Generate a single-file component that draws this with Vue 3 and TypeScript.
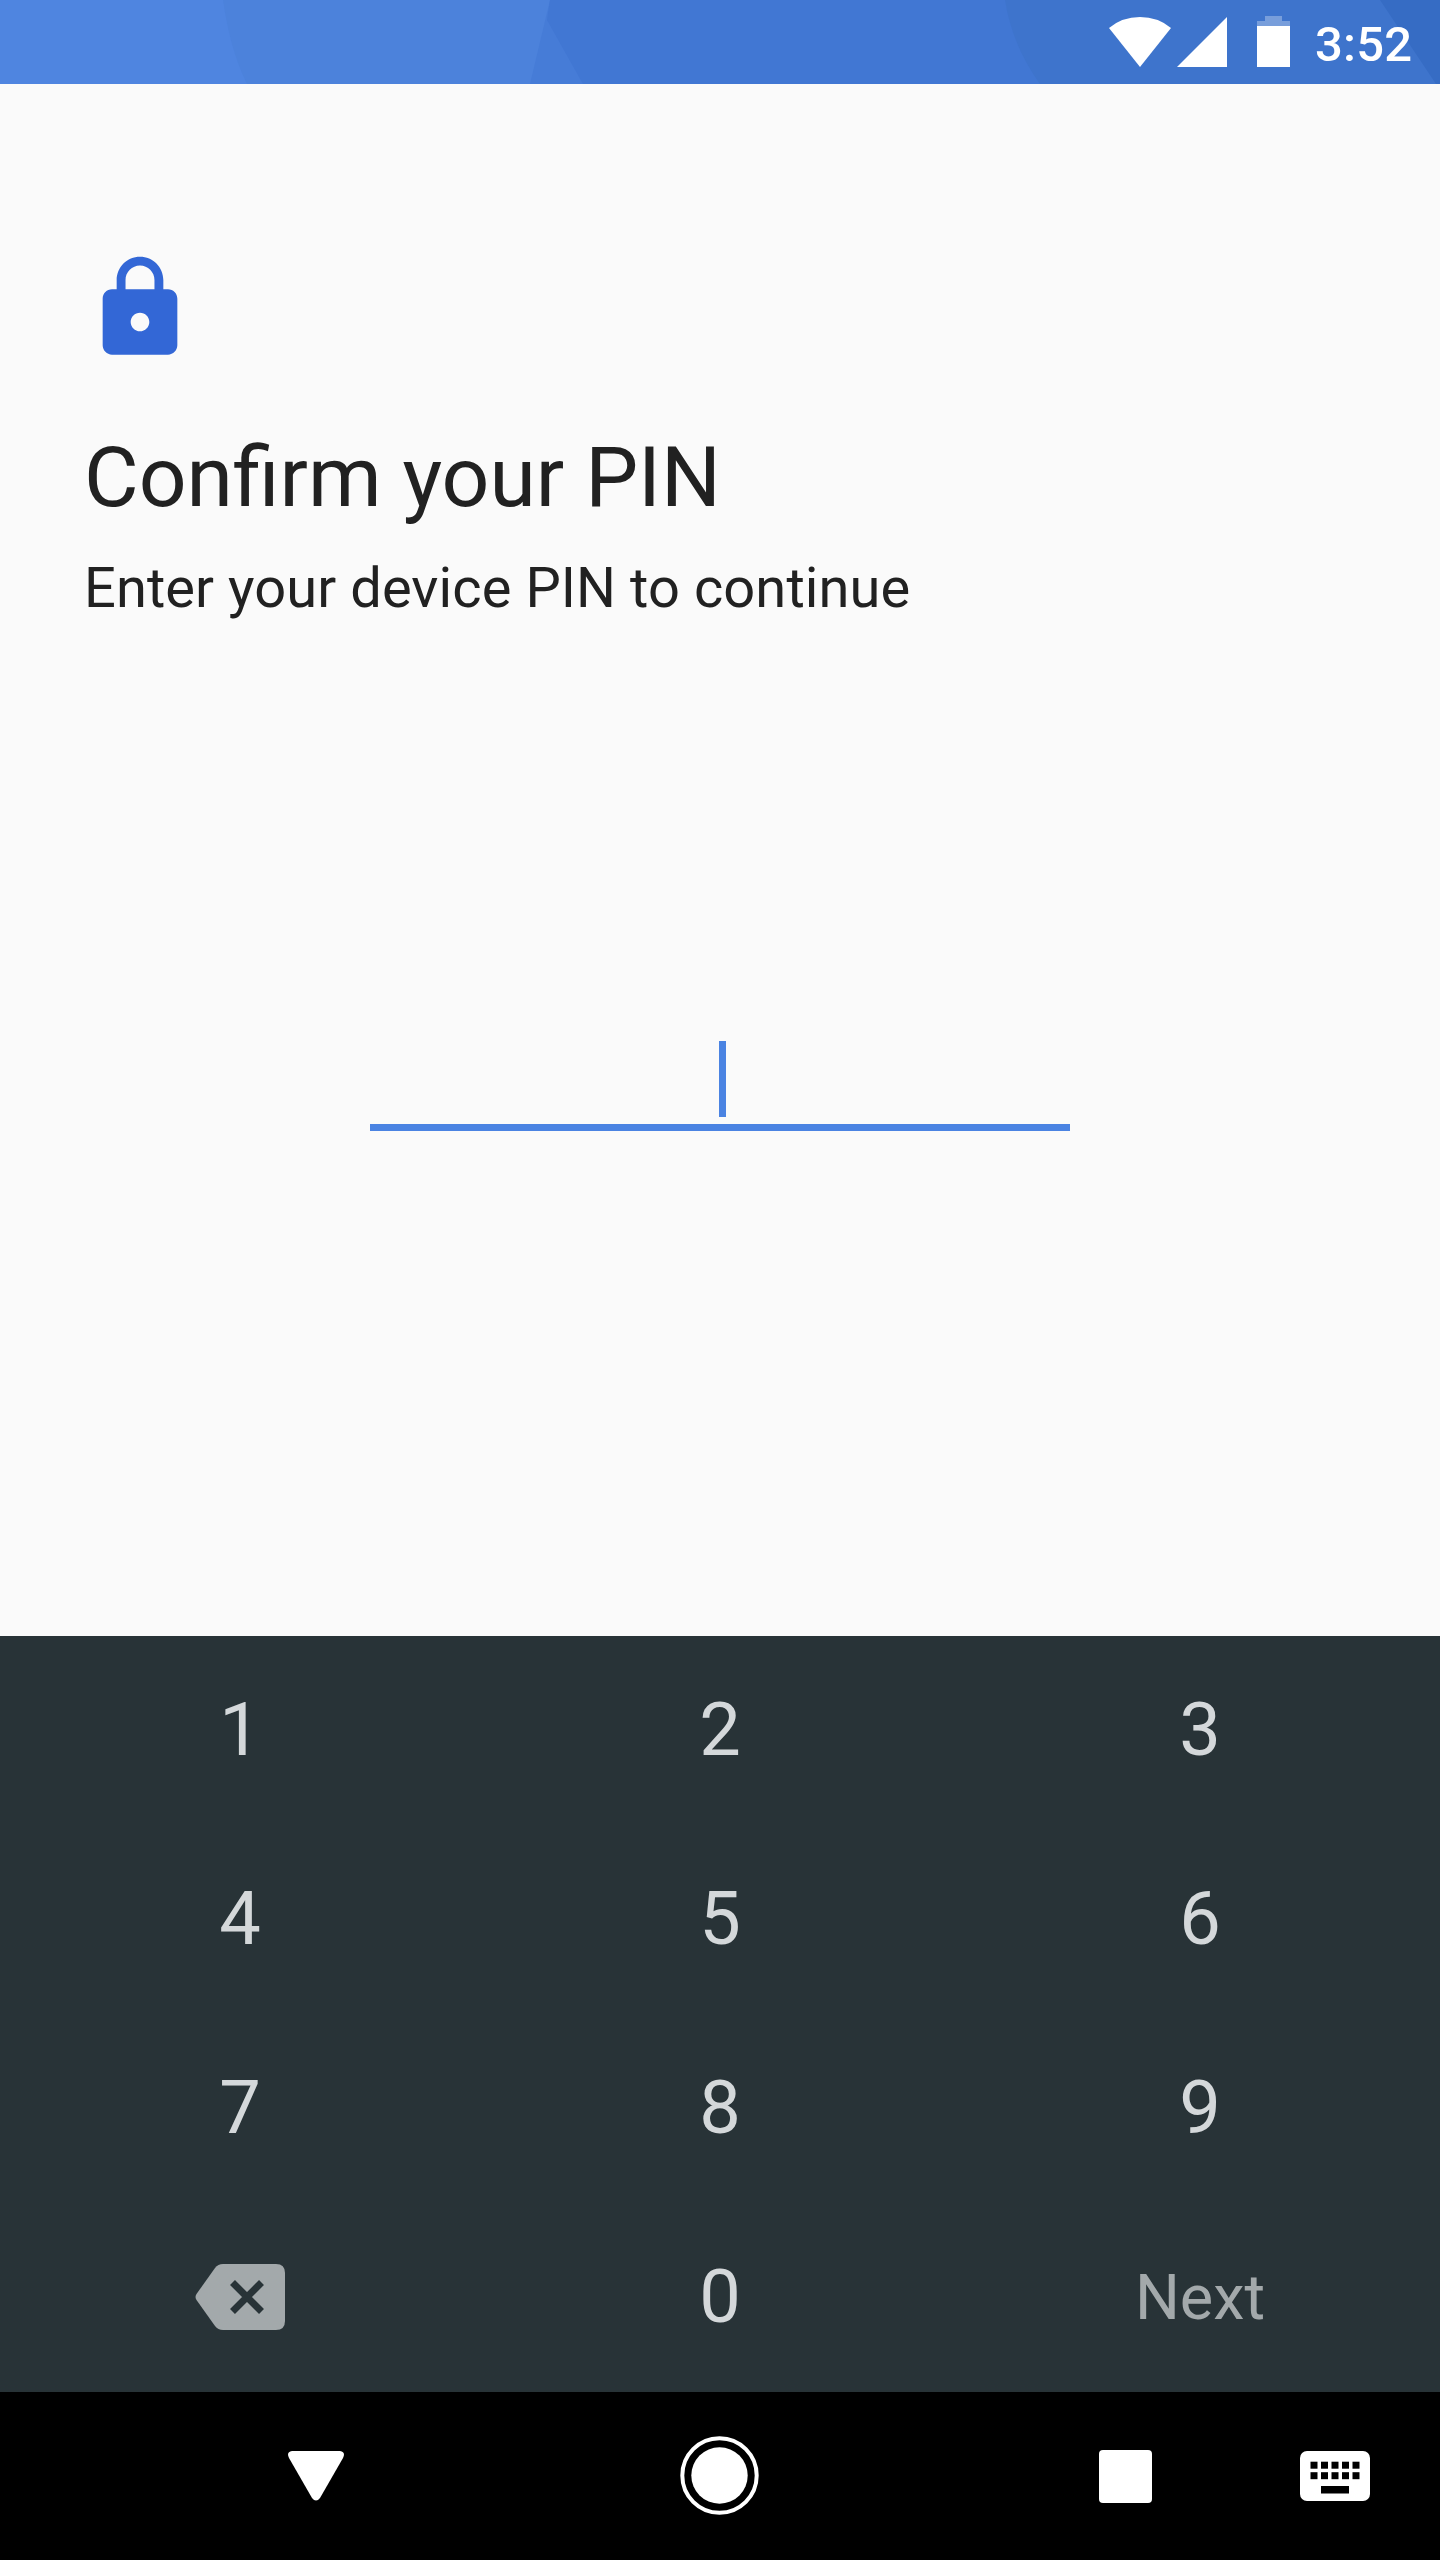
<script setup lang="ts">
interface Key {
  label: string
  kind: 'digit' | 'delete' | 'action'
}

const keys: Key[] = [
  ...['1', '2', '3', '4', '5', '6', '7', '8', '9'].map((label): Key => ({ label, kind: 'digit' })),
  { label: 'Delete', kind: 'delete' },
  { label: '0', kind: 'digit' },
  { label: 'Next', kind: 'action' },
]

const keyColumns = [0, 1, 2, 3, 4]
</script>

<template>
  <div class="screen">
    <header class="status-bar">
      <svg class="status-art" viewBox="0 0 1440 84" aria-hidden="true">
        <rect width="1440" height="84" fill="#4f85e0" />
        <path d="M223 0Q230 50 247 84H1440V0Z" fill="#4c82db" />
        <path d="M550 0 530 84H1440V0Z" fill="#467cd7" />
        <path d="M550 0 547 20 583 84H1440V0Z" fill="#4177d3" />
        <path d="M1005 0Q1012 45 1040 84H1440V0Z" fill="#3e74cc" />
        <path d="M1380 0 1436 84H1440V0Z" fill="#366cc4" />
      </svg>
      <div class="status-icons">
        <svg class="wifi" viewBox="0 0 62 50"><path d="M31 50 0 11Q13 0 31 0T62 11Z" fill="#fff" /></svg>
        <svg class="signal" viewBox="0 0 50 50"><path d="M50 0V50H0Z" fill="#fff" /></svg>
        <svg class="battery" viewBox="0 0 33 51">
          <path d="M8 0H25V5H33V10H0V5H8Z" fill="#fff" opacity=".3" />
          <path d="M0 10H33V51H0Z" fill="#fff" />
        </svg>
        <span class="clock">3:52</span>
      </div>
    </header>

    <main class="content">
      <svg class="lock" viewBox="0 0 24 24">
        <path
          fill="#3367d6"
          d="M18 8h-1V6c0-2.760-2.240-5-5-5S7 3.240 7 6v2H6c-1.100 0-2 .9-2 2v10c0 1.100.9 2 2 2h12c1.100 0 2-.9 2-2V10c0-1.100-.9-2-2-2zm-6 9c-1.100 0-2-.9-2-2s.9-2 2-2 2 .9 2 2-.9 2-2 2zm3.100-9H8.900V6c0-1.710 1.390-3.100 3.100-3.100s3.100 1.390 3.100 3.100v2z"
        />
      </svg>
      <h1>Confirm your PIN</h1>
      <p>Enter your device PIN to continue</p>
      <div class="pin-field"><span class="caret"></span></div>
    </main>

    <section class="keypad">
      <button v-for="key in keys" :key="key.label" :class="['key', key.kind]" :aria-label="key.label">
        <svg v-if="key.kind === 'delete'" class="backspace" viewBox="0 0 90 66">
          <path
            fill="#a3a9ab"
            d="M28 0H81Q90 0 90 9V57Q90 66 81 66H28Q23 66 20 62L1.500 36Q-.5 33 1.500 30L20 4Q23 0 28 0Z"
          />
          <path d="M37.500 18.500 66.500 47.500M66.500 18.500 37.500 47.500" stroke="#283337" stroke-width="7" />
        </svg>
        <template v-else>{{ key.label }}</template>
      </button>
    </section>

    <nav class="nav-bar">
      <svg class="back" viewBox="0 0 56 50">
        <path d="M4 0H52Q58 1 55 7L32 47Q28 52 24 47L1 7Q-2 1 4 0Z" fill="#fff" />
      </svg>
      <svg class="home" viewBox="0 0 80 80">
        <circle cx="39.500" cy="39.500" r="37.200" fill="none" stroke="#fff" stroke-width="4" />
        <circle cx="39.500" cy="39.500" r="28.200" fill="#fff" />
      </svg>
      <span class="recents"></span>
      <svg class="keyboard" viewBox="0 0 70 50">
        <rect width="70" height="50" rx="7" fill="#fff" />
        <template v-for="column in keyColumns" :key="column">
          <rect :x="10.500 + column * 10.500" y="10.700" width="7" height="7" />
          <rect :x="10.500 + column * 10.500" y="21.200" width="7" height="7" />
        </template>
        <rect x="21" y="35" width="28" height="7.500" />
      </svg>
    </nav>
  </div>
</template>

<style>
body {
  margin: 0;
}
</style>

<style scoped>
.screen {
  display: flex;
  flex-direction: column;
  width: 1440px;
  height: 2560px;
  overflow: hidden;
  background: #fafafa;
  font-family: Roboto, sans-serif;
}

svg {
  display: block;
  flex: none;
}

.status-bar {
  position: relative;
  flex: none;
  height: 84px;
}

.status-art {
  position: absolute;
  inset: 0;
  width: 1440px;
  height: 84px;
}

.status-icons {
  position: relative;
  display: flex;
  justify-content: flex-end;
  align-items: flex-start;
  height: 84px;
  padding-right: 27px;
}

.wifi {
  width: 62px;
  height: 50px;
  margin: 17px 6px 0 0;
}

.signal {
  width: 50px;
  height: 50px;
  margin: 17px 30px 0 0;
}

.battery {
  width: 33px;
  height: 51px;
  margin: 16px 25px 0 0;
}

.clock {
  width: 98px;
  margin-top: 16px;
  color: #fff;
  font-size: 49px;
  font-weight: 500;
  line-height: 58px;
  letter-spacing: 0.200px;
  white-space: nowrap;
}

.content {
  display: flex;
  flex: none;
  flex-direction: column;
  box-sizing: border-box;
  height: 1552px;
  padding: 168px 84px 0;
  color: #212121;
}

.lock {
  width: 112px;
  height: 112px;
}

h1 {
  margin: 65px 0 0;
  font-size: 84px;
  font-weight: 400;
  line-height: 98px;
}

p {
  margin: 28px 0 0;
  font-size: 56px;
  line-height: 66px;
  letter-spacing: 0.080px;
}

.pin-field {
  display: flex;
  align-self: center;
  box-sizing: border-box;
  width: 700px;
  height: 90px;
  margin-top: 420px;
  padding-left: 349px;
  border-bottom: 7px solid #4a83e2;
}

.caret {
  width: 7px;
  height: 76px;
  background: #4a83e2;
}

.keypad {
  display: grid;
  flex: none;
  grid-template-columns: repeat(3, 1fr);
  grid-template-rows: repeat(4, 189px);
  background: #283337;
}

.key {
  display: flex;
  align-items: center;
  justify-content: center;
  padding: 0;
  border: 0;
  background: none;
  color: #d4d8da;
  font: 400 74px/88px Roboto, sans-serif;
}

.digit {
  padding-bottom: 1px;
}

.delete {
  padding-bottom: 2px;
}

.action {
  color: #a3a9ab;
  font-size: 63px;
}

.backspace {
  width: 90px;
  height: 66px;
}

.nav-bar {
  display: flex;
  flex: none;
  align-items: center;
  height: 168px;
  background: #000;
}

.back {
  width: 56px;
  height: 50px;
  margin-left: 288px;
}

.home {
  width: 80px;
  height: 80px;
  margin-left: 336px;
}

.recents {
  width: 53px;
  height: 53px;
  margin-left: 339px;
  border-radius: 4px;
  background: #fff;
}

.keyboard {
  width: 70px;
  height: 50px;
  margin-left: 148px;
}
</style>
